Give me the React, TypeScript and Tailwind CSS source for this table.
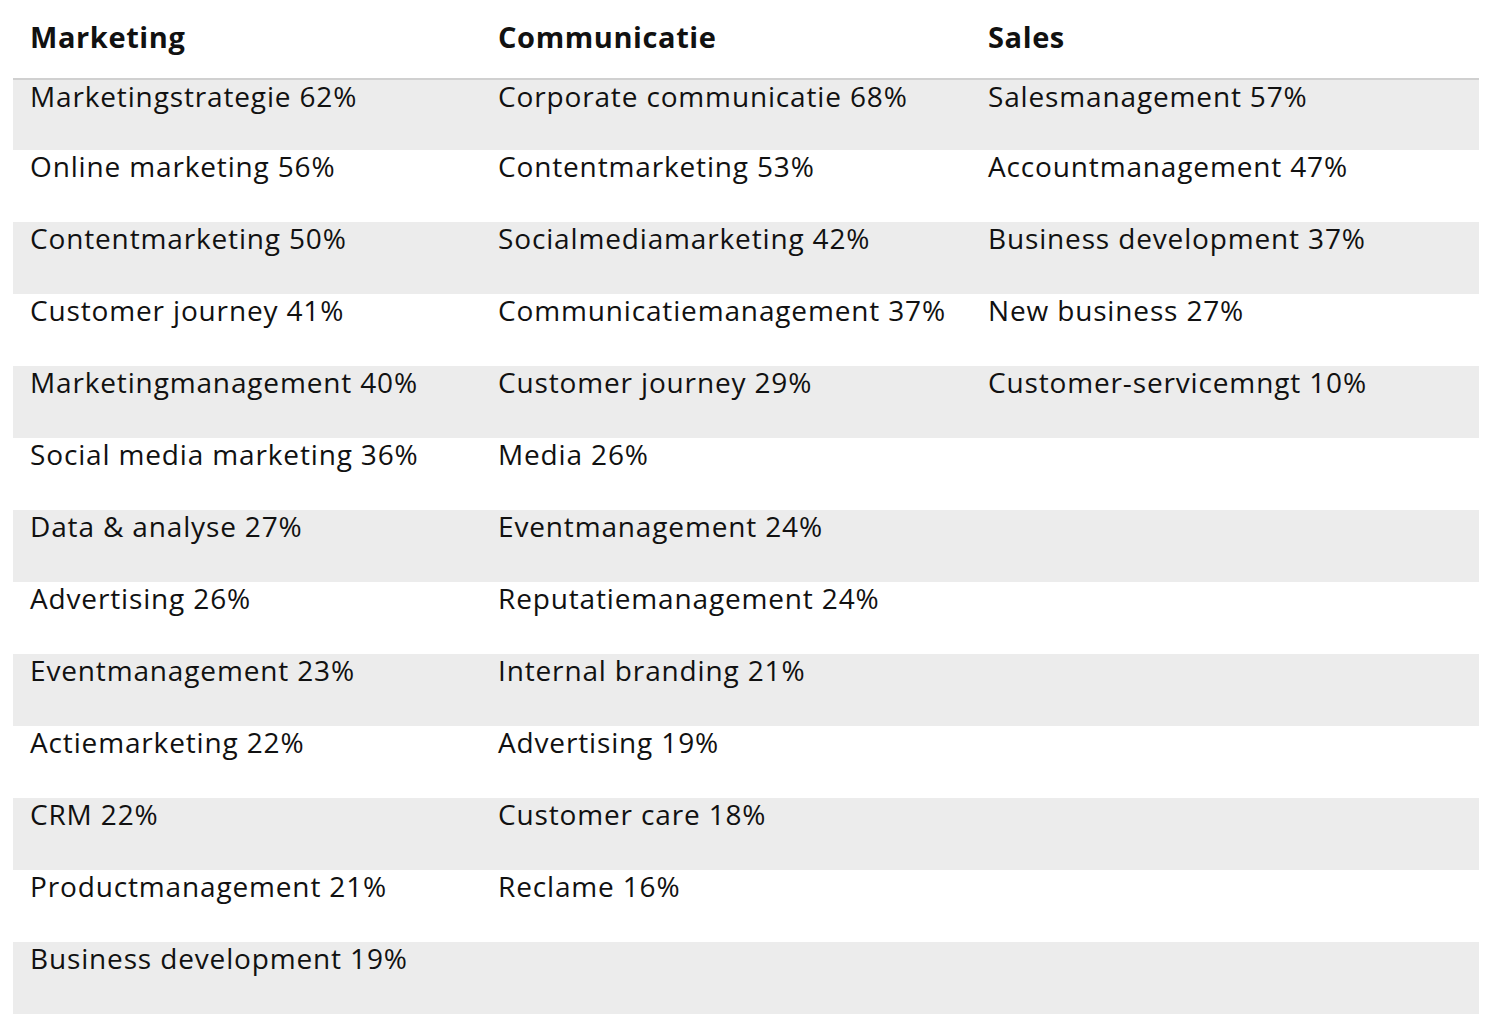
import React from "react"

const marketing = [
  "Marketingstrategie 62%",
  "Online marketing 56%",
  "Contentmarketing 50%",
  "Customer journey 41%",
  "Marketingmanagement 40%",
  "Social media marketing 36%",
  "Data & analyse 27%",
  "Advertising 26%",
  "Eventmanagement 23%",
  "Actiemarketing 22%",
  "CRM 22%",
  "Productmanagement 21%",
  "Business development 19%",
]

const communicatie = [
  "Corporate communicatie 68%",
  "Contentmarketing 53%",
  "Socialmediamarketing 42%",
  "Communicatiemanagement 37%",
  "Customer journey 29%",
  "Media 26%",
  "Eventmanagement 24%",
  "Reputatiemanagement 24%",
  "Internal branding 21%",
  "Advertising 19%",
  "Customer care 18%",
  "Reclame 16%",
]

const sales = [
  "Salesmanagement 57%",
  "Accountmanagement 47%",
  "Business development 37%",
  "New business 27%",
  "Customer-servicemngt 10%",
]

const cols = "grid grid-cols-[468px_490px_1fr]"

export default function App() {
  return (
    <div className="min-h-screen bg-white pl-[13px] pr-[9px] font-['Open_Sans',sans-serif] text-[28px] leading-[32px] tracking-[0.85px] text-[#111]">
      {/* header */}
      <div className={`${cols} h-[80px] border-b-2 border-[#d0d0d0] pt-[21px] text-[29px] font-bold tracking-[0.6px]`}>
        <div className="pl-[17px]">Marketing</div>
        <div className="pl-[17px]">Communicatie</div>
        <div className="pl-[17px]">Sales</div>
      </div>

      {marketing.map((m, i) => (
        <div
          key={m}
          className={`${cols} ${i === 0 ? "h-[70px]" : "h-[72px]"} ${i % 2 === 0 ? "bg-[#ececec]" : "bg-white"}`}
        >
          <div className="pl-[17px]">{m}</div>
          <div className="pl-[17px]">{communicatie[i] ?? ""}</div>
          <div className="pl-[17px]">{sales[i] ?? ""}</div>
        </div>
      ))}
    </div>
  )
}
